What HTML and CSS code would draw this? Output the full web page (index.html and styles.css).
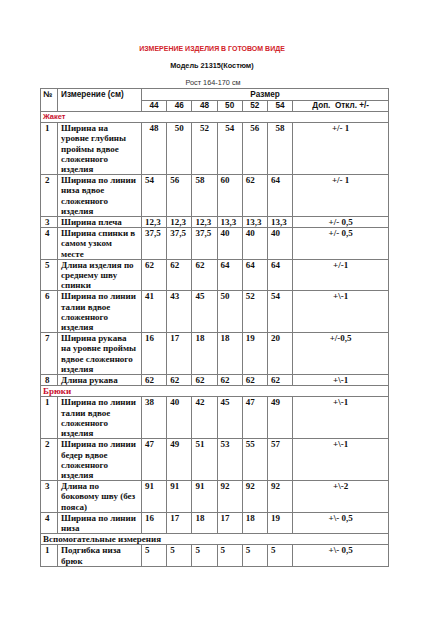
FILE: index.html
```html
<!DOCTYPE html>
<html lang="ru">
<head>
<meta charset="utf-8">
<title>Измерение изделия</title>
<link rel="stylesheet" href="styles.css">
</head>
<body>
<div class="page">
  <div class="title">ИЗМЕРЕНИЕ ИЗДЕЛИЯ В ГОТОВОМ ВИДЕ</div>
  <div class="model">Модель 21315(Костюм)</div>
  <div class="rost">Рост 164-170 см</div>
  <table class="grid">
    <colgroup>
      <col class="c-no"><col class="c-name">
      <col class="c-s"><col class="c-s"><col class="c-s"><col class="c-s"><col class="c-s"><col class="c-s">
      <col class="c-dop">
    </colgroup>
    <thead>
      <tr class="h1">
        <th rowspan="2" class="hno">№</th>
        <th rowspan="2" class="hname">Измерение (см)</th>
        <th colspan="7" class="hsize">Размер</th>
      </tr>
      <tr class="h2">
        <th>44</th><th>46</th><th>48</th><th>50</th><th>52</th><th>54</th><th>Доп.&nbsp; Откл. +/-</th>
      </tr>
    </thead>
    <tbody>
      <tr class="sec"><td colspan="9" class="sec-sans red">Жакет</td></tr>
      <tr class="center-vals"><td>1</td><td>Ширина на<br>уровне глубины проймы вдвое сложенного изделия</td><td>48</td><td>50</td><td>52</td><td>54</td><td>56</td><td>58</td><td class="dop">+/- 1</td></tr>
      <tr><td>2</td><td>Ширина по линии низа вдвое сложенного изделия</td><td>54</td><td>56</td><td>58</td><td>60</td><td>62</td><td>64</td><td class="dop">+/- 1</td></tr>
      <tr><td>3</td><td>Ширина плеча</td><td>12,3</td><td>12,3</td><td>12,3</td><td>13,3</td><td>13,3</td><td>13,3</td><td class="dop">+/- 0,5</td></tr>
      <tr><td>4</td><td>Ширина спинки в<br>самом узком<br>месте</td><td>37,5</td><td>37,5</td><td>37,5</td><td>40</td><td>40</td><td>40</td><td class="dop">+/- 0,5</td></tr>
      <tr><td>5</td><td>Длина изделия по среднему шву спинки</td><td>62</td><td>62</td><td>62</td><td>64</td><td>64</td><td>64</td><td class="dop">+/-1</td></tr>
      <tr><td>6</td><td>Ширина по линии талии вдвое сложенного изделия</td><td>41</td><td>43</td><td>45</td><td>50</td><td>52</td><td>54</td><td class="dop">+\-1</td></tr>
      <tr><td>7</td><td>Ширина рукава на уровне проймы вдвое сложенного изделия</td><td>16</td><td>17</td><td>18</td><td>18</td><td>19</td><td>20</td><td class="dop">+/-0,5</td></tr>
      <tr><td>8</td><td>Длина рукава</td><td>62</td><td>62</td><td>62</td><td>62</td><td>62</td><td>62</td><td class="dop">+\-1</td></tr>
      <tr class="sec"><td colspan="9" class="red">Брюки</td></tr>
      <tr><td>1</td><td>Ширина по линии талии вдвое сложенного изделия</td><td>38</td><td>40</td><td>42</td><td>45</td><td>47</td><td>49</td><td class="dop">+\-1</td></tr>
      <tr><td>2</td><td>Ширина по линии бедер вдвое сложенного изделия</td><td>47</td><td>49</td><td>51</td><td>53</td><td>55</td><td>57</td><td class="dop">+\-1</td></tr>
      <tr><td>3</td><td>Длина по боковому шву (без пояса)</td><td>91</td><td>91</td><td>91</td><td>92</td><td>92</td><td>92</td><td class="dop">+\-2</td></tr>
      <tr><td>4</td><td>Ширина по линии низа</td><td>16</td><td>17</td><td>18</td><td>17</td><td>18</td><td>19</td><td class="dop">+\- 0,5</td></tr>
      <tr class="sec"><td colspan="9">Вспомогательные измерения</td></tr>
      <tr><td>1</td><td>Подгибка низа брюк</td><td>5</td><td>5</td><td>5</td><td>5</td><td>5</td><td>5</td><td class="dop">+\- 0,5</td></tr>
    </tbody>
  </table>
</div>
</body>
</html>
```
FILE: styles.css
```css
html, body {
  margin: 0;
  padding: 0;
  background: #ffffff;
}
.page {
  width: 424px;
  padding-top: 44px;
  color: #111;
}
.title {
  font-family: "Liberation Sans", Arial, sans-serif;
  font-weight: bold;
  font-size: 7px;
  color: #d2232a;
  text-align: center;
  line-height: 10px;
}
.model {
  font-family: "Liberation Sans", Arial, sans-serif;
  font-weight: bold;
  font-size: 7.3px;
  text-align: center;
  line-height: 10px;
  margin-top: 7px;
}
.rost {
  font-family: "Liberation Sans", Arial, sans-serif;
  font-size: 7.3px;
  color: #333;
  text-align: center;
  line-height: 10px;
  margin-top: 7px;
  padding-left: 2px;
}
.grid {
  border-collapse: collapse;
  margin-left: 40px;
  margin-top: 0;
  width: 348px;
  table-layout: fixed;
  font-family: "Liberation Serif", "Times New Roman", serif;
  font-weight: bold;
  font-size: 9px;
}
.c-no { width: 17px; }
.c-name { width: 84px; }
.c-s { width: 25.2px; }
.c-dop { width: 96px; }
.grid th, .grid td {
  border: 1px solid #7d7d7d;
  padding: 0 3px;
  line-height: 10.2px;
  vertical-align: top;
  text-align: left;
}
.grid td:nth-child(2) {
  padding-right: 3px;
}
.grid th {
  font-family: "Liberation Sans", Arial, sans-serif;
  font-size: 8.2px;
  font-weight: bold;
  text-align: center;
  line-height: 10px;
}
.grid .h1 th {
  line-height: 11px;
}
.grid th.hno, .grid th.hname {
  text-align: left;
}
.grid th.hno { padding-left: 2px; }
.grid th.hname { padding-left: 3px; }
.grid th.hsize { font-size: 8.2px; }
.grid td:first-child {
  padding-left: 4px;
}
.grid td.dop {
  text-align: center;
}
.center-vals td {
  text-align: center;
}
.center-vals td:first-child,
.center-vals td:nth-child(2) {
  text-align: left;
}
.sec td {
  padding-left: 2px !important;
}
.red {
  color: #c8102e;
}
.sec-sans {
  font-family: "Liberation Sans", Arial, sans-serif;
  font-size: 7.5px;
}
```
